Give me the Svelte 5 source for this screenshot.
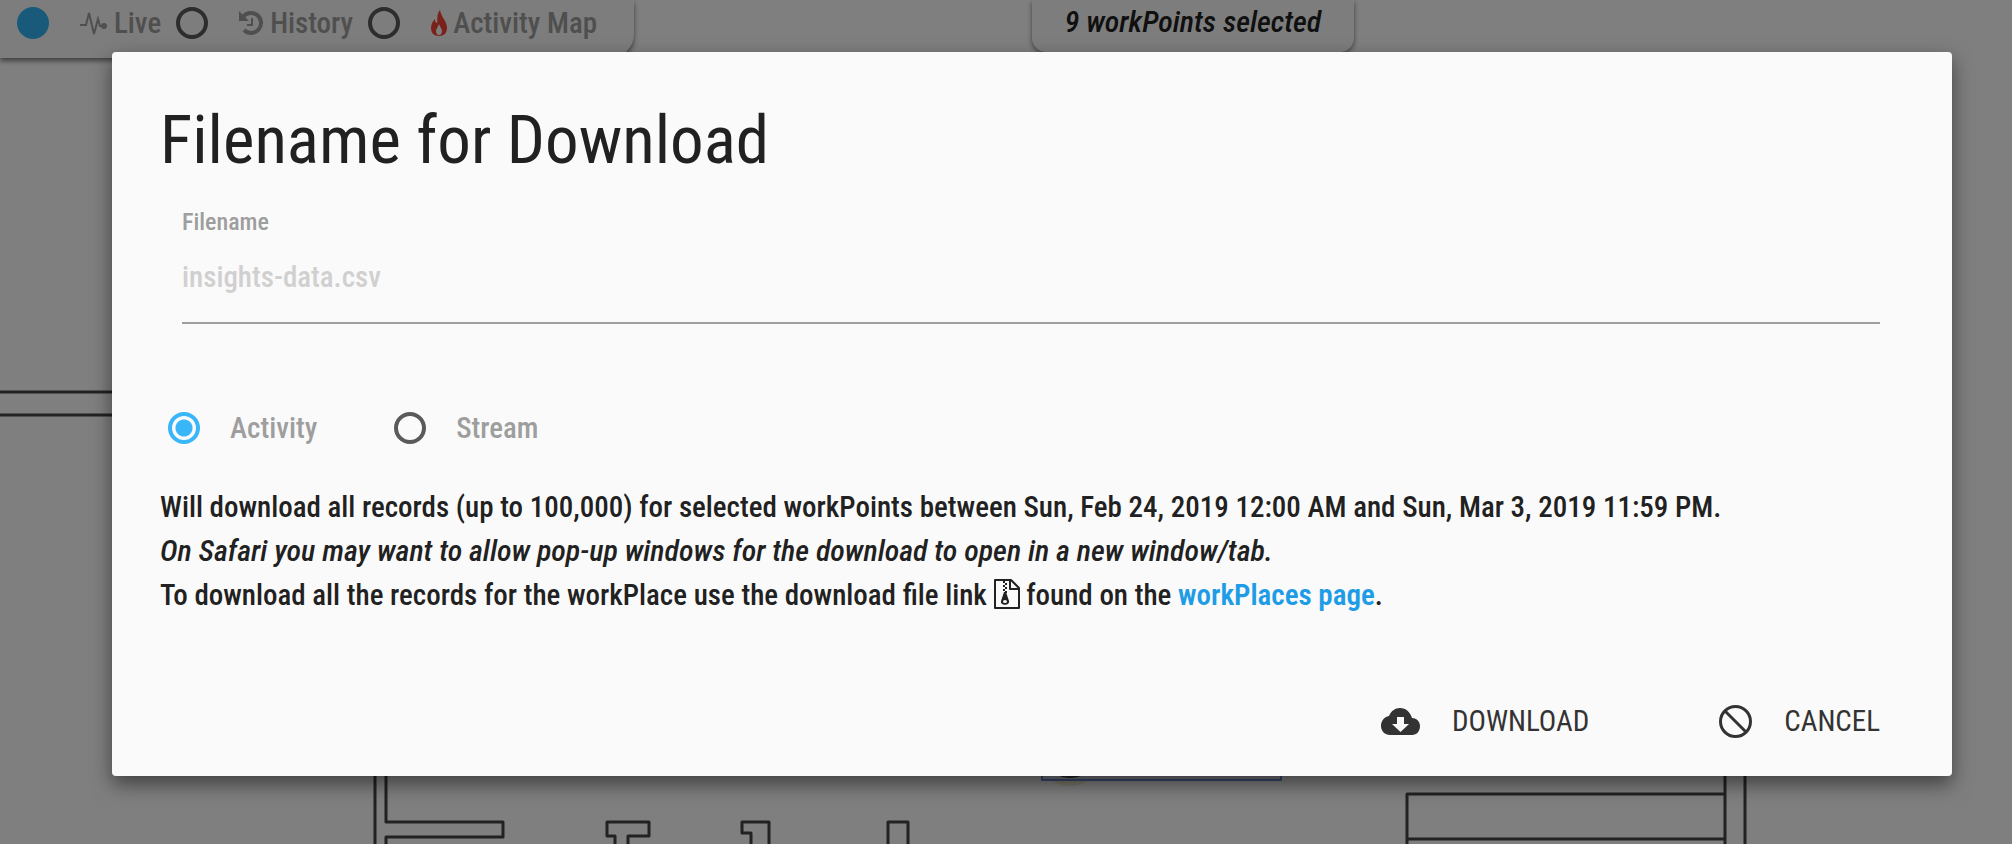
<script>
  let mode = "live";
  let kind = "activity";
  let filename = "";
  let open = true;

  const kinds = [
    { id: "activity", label: "Activity" },
    { id: "stream", label: "Stream" }
  ];

  function close() {
    open = false;
  }
</script>

<div class="page">
  <!-- floor plan behind everything -->
  <svg class="plan" aria-hidden="true">
    <path d="M0 392H375V844 M0 415H375" />
    <path d="M386 600V822H503V837H386V844" />
    <path d="M615 846V836H607V822H649V836H628V846" />
    <path d="M751 846V833H742V822H769V846" />
    <path d="M888 846V822H908V846" />
    <path d="M1407 846V794H1725 M1407 839H1725 M1725 600V846 M1745 600V846" />
    <ellipse class="glow" cx="1070" cy="778" rx="18" ry="8" />
    <rect class="zone" x="1042" y="700" width="239" height="80" />
    <ellipse class="spot" cx="1070" cy="768" rx="18" ry="10" />
  </svg>

  <header>
    <div class="modes">
      <label>
        <input type="radio" name="mode" value="live" bind:group={mode} />
        <svg width="28" height="26" viewBox="0 0 28 26" class="line">
          <path d="M0 15H6L9 3L14 24L18 9L20 16H24" />
          <circle cx="24" cy="16" r="3" fill="currentColor" stroke="none" />
        </svg>
        Live
      </label>
      <label>
        <input type="radio" name="mode" value="history" bind:group={mode} />
        <svg class="history" width="25" height="26" viewBox="0 0 25 26">
          <path d="M4 7A10 10 0 1 1 5 20" fill="none" stroke="currentColor" stroke-width="4" />
          <path d="M0 1V11H10Z" fill="currentColor" />
          <path d="M13 8V15H8" fill="none" stroke="currentColor" stroke-width="2" />
        </svg>
        History
      </label>
      <label>
        <input type="radio" name="mode" value="map" bind:group={mode} />
        <svg class="flame" width="16" height="26" viewBox="0 0 16 26">
          <path fill-rule="evenodd" d="M9 0C10 7 16 11 16 18C16 23 13 26 8 26C3 26 0 23 0 18C0 14 2 11 4 9C4 12 5 13 6 13C7 10 5 5 9 0ZM8 14C7 17 5 19 5 21C5 23 6 25 8 25C10 25 11 23 11 21C11 19 9 17 8 14Z" />
        </svg>
        Activity Map
      </label>
    </div>
    <div class="selected">9 workPoints selected</div>
  </header>

  {#if open}
    <div class="backdrop">
      <form class="dialog" role="dialog" aria-labelledby="title" on:submit|preventDefault={close}>
        <h1 id="title">Filename for Download</h1>

        <div class="field">
          <label for="filename">Filename</label>
          <input id="filename" type="text" placeholder="insights-data.csv" bind:value={filename} />
        </div>

        <div class="kinds">
          {#each kinds as k (k.id)}
            <label>
              <input type="radio" name="kind" value={k.id} bind:group={kind} />
              {k.label}
            </label>
          {/each}
        </div>

        <p>
          Will download all records (up to 100,000) for selected workPoints between Sun, Feb 24, 2019 12:00 AM and Sun, Mar 3, 2019 11:59 PM.<br />
          <em>On Safari you may want to allow pop-up windows for the download to open in a new window/tab.</em><br />
          To download all the records for the workPlace use the download file link
          <svg class="file" width="26" height="30" viewBox="0 0 26 30">
            <path d="M1 1H17L25 9V29H1Z M16 1V10H25" fill="none" stroke="currentColor" stroke-width="2" stroke-linejoin="round" />
            <path d="M10 2V14" fill="none" stroke="currentColor" stroke-width="2" stroke-dasharray="2 2" />
            <path d="M12 4V14" fill="none" stroke="currentColor" stroke-width="2" stroke-dasharray="2 2" />
            <path fill-rule="evenodd" d="M10 13H12L15 22C16 27 6 27 7 22ZM11 21A2 1.500 0 1 0 11 24A2 1.500 0 1 0 11 21Z" fill="currentColor" />
          </svg>
          found on the <a href="#workplaces">workPlaces page</a>.
        </p>

        <div class="actions">
          <button type="submit">
            <svg width="39" height="34" viewBox="0 0 39 34">
              <path fill-rule="evenodd" d="M9 34C4 34 0 30 0 25C0 20 3 16 8 15C10 10 14 7 19 7C25 7 29 11 31 17C36 17 39 21 39 25C39 30 36 34 31 34ZM16 16V23H11L19.500 31L28 23H23V16Z" fill="currentColor" transform="translate(0 -3)" />
            </svg>
            DOWNLOAD
          </button>
          <button type="button" on:click={close}>
            <svg width="33" height="33" viewBox="0 0 33 33">
              <circle cx="16.500" cy="16.500" r="15" />
              <path d="M6 6L27 27" />
            </svg>
            CANCEL
          </button>
        </div>
      </form>
    </div>
  {/if}
</div>

<style>
  :global(body) {
    margin: 0;
    background: #fff;
  }

  .page {
    position: relative;
    min-height: 100vh;
    overflow: hidden;
    font-family: "Roboto Condensed", "Liberation Sans Narrow", Roboto, sans-serif;
    font-size: 29px;
    line-height: 44px;
    color: #212121;
  }

  .plan {
    position: absolute;
    inset: 0;
    width: 100%;
    height: 100%;
    fill: none;
    stroke: #444;
    stroke-width: 3;
    stroke-linejoin: round;
  }

  .plan .zone {
    fill: #dfe3f4;
    stroke: #6f8fd8;
    stroke-width: 2;
  }

  .plan .spot {
    fill: #444;
    stroke: none;
  }

  .plan .glow {
    fill: #f4ecd4;
    stroke: none;
  }

  header {
    position: relative;
    display: flex;
    align-items: flex-start;
  }

  .modes {
    box-sizing: border-box;
    display: flex;
    gap: 15px;
    width: 634px;
    height: 58px;
    padding-left: 17px;
    background: #fafafa;
    border-bottom-right-radius: 24px;
    box-shadow: 0 3px 5px rgba(0, 0, 0, 0.5);
  }

  .modes label {
    display: flex;
    align-items: center;
    height: 46px;
    gap: 6px;
    color: #9e9e9e;
    font-weight: 500;
    white-space: nowrap;
  }

  .modes input {
    margin-right: 25px;
  }

  .modes input:checked {
    background: #32b5f5;
    border-color: #32b5f5;
  }

  .line {
    fill: none;
    stroke: currentColor;
    stroke-width: 2;
  }

  .flame {
    fill: #f44336;
  }

  .selected {
    box-sizing: border-box;
    width: 322px;
    height: 52px;
    margin-left: 398px;
    background: #fafafa;
    border-radius: 0 0 14px 14px;
    box-shadow: 0 2px 5px rgba(0, 0, 0, 0.5);
    font-size: 30px;
    font-style: italic;
    font-weight: 500;
    text-align: center;
    white-space: nowrap;
  }

  input[type="radio"] {
    appearance: none;
    box-sizing: border-box;
    flex: none;
    width: 32px;
    height: 32px;
    margin-top: 0;
    margin-bottom: 0;
    margin-left: 0;
    border: 4px solid #5a5a5a;
    border-radius: 50%;
  }

  .backdrop {
    position: absolute;
    inset: 0;
    padding: 52px 60px 68px 112px;
    background: rgba(0, 0, 0, 0.5);
  }

  .dialog {
    display: flex;
    flex-direction: column;
    box-sizing: border-box;
    min-height: 100%;
    padding: 48px;
    background: #fafafa;
    border-radius: 4px;
    box-shadow: 0 8px 20px rgba(0, 0, 0, 0.5);
  }

  h1 {
    margin: 0;
    font-size: 67px;
    font-weight: 400;
    line-height: 80px;
  }

  .field {
    display: flex;
    flex-direction: column;
    margin: 26px 24px 0 22px;
    font-weight: 500;
  }

  .field label {
    font-size: 24px;
    line-height: 32px;
    color: #9e9e9e;
  }

  .field input {
    height: 86px;
    padding: 0 0 6px;
    border: 0;
    border-bottom: 2px solid #9e9e9e;
    box-sizing: border-box;
    outline: none;
    background: none;
    font: inherit;
    color: inherit;
  }

  .field input::placeholder {
    color: #d0d0d0;
    opacity: 1;
  }

  .kinds {
    display: flex;
    gap: 77px;
    margin: 82px 0 0 8px;
  }

  .kinds label {
    display: flex;
    align-items: center;
    gap: 30px;
    color: #9e9e9e;
    font-weight: 500;
  }

  .kinds input {
    margin-right: 0;
  }

  .kinds input:checked {
    border-color: #38b6f8;
    background: radial-gradient(circle, #38b6f8 8px, transparent 9px);
  }

  p {
    margin: 35px 0 0;
    font-weight: 500;
  }

  em {
    font-size: 30px;
  }

  .file {
    vertical-align: -4px;
  }

  a {
    color: #1e9de6;
    font-weight: 600;
    text-decoration: none;
  }

  .actions {
    display: flex;
    justify-content: flex-end;
    gap: 130px;
    margin: auto 24px -15px 0;
  }

  button {
    display: flex;
    align-items: center;
    gap: 32px;
    padding: 0;
    border: 0;
    background: none;
    font: inherit;
    color: #333;
  }

  button circle,
  button circle + path {
    fill: none;
    stroke: currentColor;
    stroke-width: 3;
  }
</style>
